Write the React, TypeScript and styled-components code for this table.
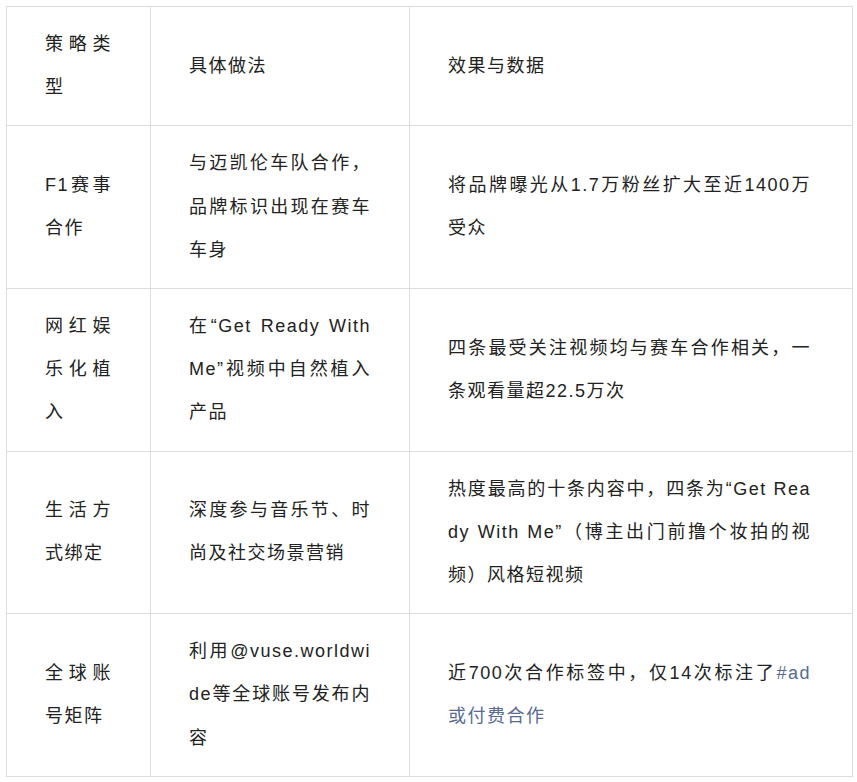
import styled, { createGlobalStyle } from "styled-components";

const GlobalStyle = createGlobalStyle`
	body {
		margin: 0;
		background: #fff;
	}
`;

const Page = styled.div`
	padding: 6px 5px 6px 6px;
`;

const Table = styled.table`
	width: 846px;
	border-collapse: collapse;
	table-layout: fixed;
	font-family: "Liberation Sans", "Noto Sans CJK SC", sans-serif;
	font-size: 18px;
	letter-spacing: 1.5px;
	line-height: 43.2px;
	color: #222;
	text-spacing-trim: space-all;
`;

const Cell = styled.td<{ $wide?: boolean }>`
	border: 1px solid #dddddd;
	padding: 16px ${(p) => (p.$wide ? "41px" : "38px")} 16px 38px;
	vertical-align: middle;
	text-align: justify;
	word-break: break-all;
`;

const Tag = styled.span`
	color: #576b95;
`;

const rows = [
	["策略类型", "具体做法", "效果与数据"],
	["F1赛事合作", "与迈凯伦车队合作，品牌标识出现在赛车车身", "将品牌曝光从1.7万粉丝扩大至近1400万受众"],
	["网红娱乐化植入", "在“Get Ready With Me”视频中自然植入产品", "四条最受关注视频均与赛车合作相关，一条观看量超22.5万次"],
	["生活方式绑定", "深度参与音乐节、时尚及社交场景营销", "热度最高的十条内容中，四条为“Get Ready With Me”（博主出门前撸个妆拍的视频）风格短视频"],
];

export default function App() {
	return (
		<Page>
			<GlobalStyle />
			<Table>
				<colgroup>
					<col style={{ width: 144 }} />
					<col style={{ width: 259 }} />
					<col style={{ width: 443 }} />
				</colgroup>
				<tbody>
					{rows.map((r, i) => (
						<tr key={i}>
							{r.map((c, j) => (
								<Cell key={j} $wide={j === 2}>{c}</Cell>
							))}
						</tr>
					))}
					<tr>
						<Cell>全球账号矩阵</Cell>
						<Cell>利用@vuse.worldwide等全球账号发布内容</Cell>
						<Cell $wide>
							近700次合作标签中，仅14次标注了<Tag>#ad或付费合作</Tag>
						</Cell>
					</tr>
				</tbody>
			</Table>
		</Page>
	);
}
